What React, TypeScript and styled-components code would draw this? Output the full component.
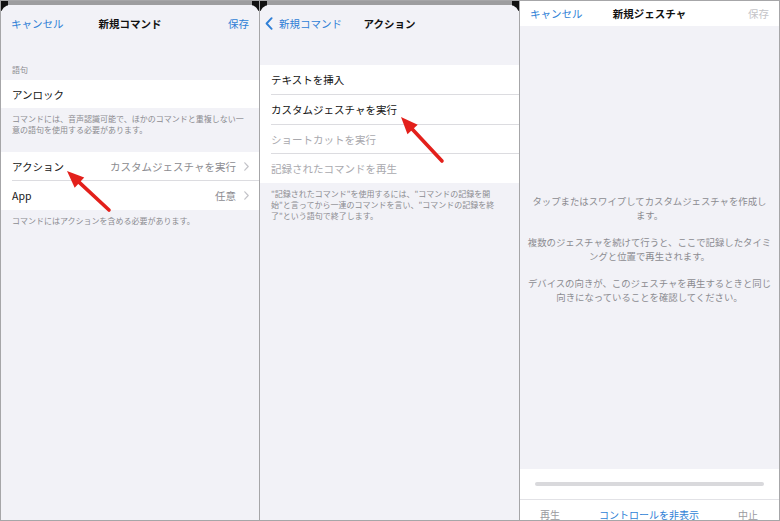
import React from "react";
import styled, { createGlobalStyle } from "styled-components";

const Global = createGlobalStyle`
  html, body { margin: 0; padding: 0; background: #ffffff; }
  body { font-family: "Noto Sans CJK JP", "Noto Sans", sans-serif; -webkit-font-smoothing: antialiased; }
`;

const BLUE = "#2f7fd6";
const GRAY = "#8b8b90";
const BG = "#f2f2f7";
const SEP = "#dcdce0";

const Frame = styled.div`
  width: 780px;
  height: 521px;
  box-sizing: border-box;
  padding: 1px;
  background: #a6a6a8;
  display: grid;
  grid-template-columns: 258px 259px 259px;
  column-gap: 1px;
  overflow: hidden;
`;

const Panel = styled.div`
  position: relative;
  background: ${BG};
  display: flex;
  flex-direction: column;
  overflow: hidden;
  height: 519px;
`;

const Backdrop = styled.div`
  position: relative;
  height: 4px;
  background: #9d9d9f;
  flex: none;
  &::before, &::after {
    content: "";
    position: absolute;
    top: 0;
    width: 7px;
    height: 10px;
    background: #111;
  }
  &::before { left: 0; }
  &::after { right: 0; }
`;

const Sheet = styled.div`
  position: relative;
  z-index: 1;
  flex: 1;
  background: ${BG};
  border-radius: 9px 9px 0 0;
  display: flex;
  flex-direction: column;
`;

const NavBar = styled.div<{ $white?: boolean; $h: number }>`
  position: relative;
  height: ${(p) => p.$h}px;
  flex: none;
  display: flex;
  align-items: center;
  justify-content: space-between;
  padding: 0 10px;
  background: ${(p) => (p.$white ? "#ffffff" : "transparent")};
  font-size: 10.5px;
`;

const NavTitle = styled.div`
  position: absolute;
  left: 0;
  right: 0;
  text-align: center;
  font-weight: 700;
  color: #111;
  pointer-events: none;
`;

const NavButton = styled.span<{ $disabled?: boolean }>`
  color: ${(p) => (p.$disabled ? "#c4c4c8" : BLUE)};
  display: inline-flex;
  align-items: center;
  gap: 6px;
`;

const SectionHeader = styled.div`
  margin: 24px 0 5px;
  padding: 0 11px;
  font-size: 8px;
  line-height: 10px;
  color: ${GRAY};
`;

const Group = styled.div<{ $mt: number }>`
  margin-top: ${(p) => p.$mt}px;
  background: #ffffff;
`;

const Row = styled.div<{ $h: number; $last?: boolean; $muted?: boolean }>`
  height: ${(p) => p.$h}px;
  margin-left: 11px;
  padding-right: 10px;
  display: flex;
  align-items: center;
  justify-content: space-between;
  box-sizing: border-box;
  border-bottom: ${(p) => (p.$last ? "none" : `1px solid ${SEP}`)};
  font-size: 10.5px;
  color: ${(p) => (p.$muted ? "#a9a9ae" : "#141414")};
`;

const Value = styled.span`
  display: inline-flex;
  align-items: center;
  gap: 8px;
  color: ${GRAY};
`;

const Footer = styled.div<{ $mt: number }>`
  margin-top: ${(p) => p.$mt}px;
  padding: 0 11px;
  font-size: 8px;
  line-height: 11px;
  color: ${GRAY};
  white-space: nowrap;
`;

const GestureBody = styled.div`
  flex: 1;
  display: flex;
  flex-direction: column;
  align-items: center;
  justify-content: center;
  gap: 13px;
  padding: 3px 12px 0;
`;

const Para = styled.p`
  margin: 0;
  text-align: center;
  font-size: 9.4px;
  line-height: 14px;
  height: 28px;
  color: ${GRAY};
  white-space: nowrap;
`;

const Controls = styled.div`
  flex: none;
  height: 51px;
  overflow: hidden;
  background: #ffffff;
  display: flex;
  flex-direction: column;
`;

const TrackArea = styled.div`
  height: 30px;
  flex: none;
  display: flex;
  align-items: center;
  padding: 0 15px;
  border-bottom: 1px solid #e2e2e6;
`;

const Track = styled.div`
  flex: 1;
  height: 4px;
  border-radius: 2px;
  background: #d9d9dc;
`;

const Toolbar = styled.div`
  height: 28px;
  flex: none;
  display: flex;
  align-items: center;
  justify-content: space-between;
  padding: 0 21px 0 20px;
  font-size: 10px;
`;

const ToolItem = styled.span<{ $blue?: boolean }>`
  color: ${(p) => (p.$blue ? BLUE : "#9a9a9e")};
`;

const ArrowSvg = styled.svg`
  position: absolute;
  left: 0;
  top: 0;
  z-index: 5;
  pointer-events: none;
`;

const Chevron = () => (
  <svg width="5" height="9" viewBox="0 0 5 9">
    <path d="M0.8 0.8 L4.2 4.5 L0.8 8.2" fill="none" stroke="#c3c3c8" strokeWidth="1.2" strokeLinecap="round" strokeLinejoin="round" />
  </svg>
);

const BackChevron = () => (
  <svg width="8" height="13" viewBox="0 0 8 13">
    <path d="M6.6 1.2 L1.6 6.5 L6.6 11.8" fill="none" stroke={BLUE} strokeWidth="1.9" strokeLinecap="round" strokeLinejoin="round" />
  </svg>
);

type Pt = [number, number];
const Arrow = ({ tip, tail }: { tip: Pt; tail: Pt }) => {
  const dx = tail[0] - tip[0];
  const dy = tail[1] - tip[1];
  const len = Math.hypot(dx, dy);
  const ux = dx / len;
  const uy = dy / len;
  const headLen = 17;
  const headW = 7;
  const bx = tip[0] + ux * headLen;
  const by = tip[1] + uy * headLen;
  const px = -uy;
  const py = ux;
  const head = `${tip[0]},${tip[1]} ${bx + px * headW},${by + py * headW} ${bx - px * headW},${by - py * headW}`;
  return (
    <ArrowSvg width="259" height="519">
      <line x1={bx - ux * 1} y1={by - uy * 1} x2={tail[0]} y2={tail[1]} stroke="#e3201b" strokeWidth="3.6" strokeLinecap="round" />
      <polygon points={head} fill="#e3201b" />
    </ArrowSvg>
  );
};

export default function App() {
  return (
    <>
      <Global />
      <Frame>
        <Panel>
          <Backdrop />
          <Sheet>
            <NavBar $h={36}>
              <NavButton>キャンセル</NavButton>
              <NavTitle>新規コマンド</NavTitle>
              <NavButton>保存</NavButton>
            </NavBar>
            <SectionHeader>語句</SectionHeader>
            <Group $mt={0}>
              <Row $h={28} $last>アンロック</Row>
            </Group>
            <Footer $mt={5}>
              コマンドには、音声認識可能で、ほかのコマンドと重複しない一
              <br />
              意の語句を使用する必要があります。
            </Footer>
            <Group $mt={17}>
              <Row $h={29}>
                アクション
                <Value>
                  カスタムジェスチャを実行
                  <Chevron />
                </Value>
              </Row>
              <Row $h={29} $last>
                App
                <Value>
                  任意
                  <Chevron />
                </Value>
              </Row>
            </Group>
            <Footer $mt={5}>コマンドにはアクションを含める必要があります。</Footer>
          </Sheet>
          <Arrow tip={[66, 170]} tail={[108, 209]} />
        </Panel>

        <Panel>
          <Backdrop />
          <Sheet>
            <NavBar $h={36} style={{ paddingLeft: 5 }}>
              <NavButton>
                <BackChevron />
                新規コマンド
              </NavButton>
              <NavTitle>アクション</NavTitle>
              <span />
            </NavBar>
            <Group $mt={24}>
              <Row $h={30}>テキストを挿入</Row>
              <Row $h={30}>カスタムジェスチャを実行</Row>
              <Row $h={29} $muted>ショートカットを実行</Row>
              <Row $h={29} $muted $last>記録されたコマンドを再生</Row>
            </Group>
            <Footer $mt={5}>
              "記録されたコマンド"を使用するには、"コマンドの記録を開
              <br />
              始"と言ってから一連のコマンドを言い、"コマンドの記録を終
              <br />
              了"という語句で終了します。
            </Footer>
          </Sheet>
          <Arrow tip={[141, 116]} tail={[182, 160]} />
        </Panel>

        <Panel>
          <NavBar $h={25} $white>
            <NavButton>キャンセル</NavButton>
            <NavTitle>新規ジェスチャ</NavTitle>
            <NavButton $disabled>保存</NavButton>
          </NavBar>
          <GestureBody>
            <Para>
              タップまたはスワイプしてカスタムジェスチャを作成し
              <br />
              ます。
            </Para>
            <Para>
              複数のジェスチャを続けて行うと、ここで記録したタイミ
              <br />
              ングと位置で再生されます。
            </Para>
            <Para>
              デバイスの向きが、このジェスチャを再生するときと同じ
              <br />
              向きになっていることを確認してください。
            </Para>
          </GestureBody>
          <Controls>
            <TrackArea>
              <Track />
            </TrackArea>
            <Toolbar>
              <ToolItem>再生</ToolItem>
              <ToolItem $blue>コントロールを非表示</ToolItem>
              <ToolItem>中止</ToolItem>
            </Toolbar>
          </Controls>
        </Panel>
      </Frame>
    </>
  );
}
